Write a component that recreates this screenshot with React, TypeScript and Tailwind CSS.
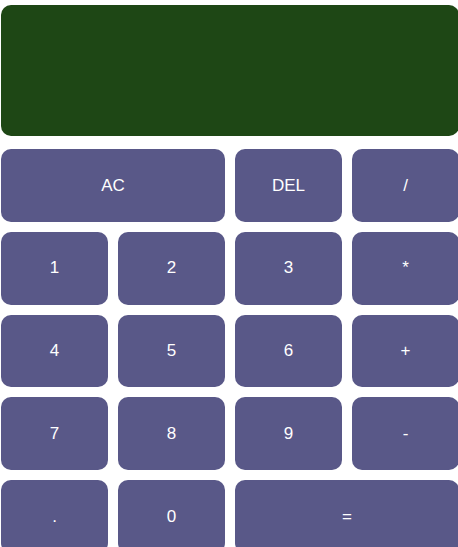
import React from "react";

const keys: { label: string; span?: boolean }[] = [
  { label: "AC", span: true },
  { label: "DEL" },
  { label: "/" },
  { label: "1" },
  { label: "2" },
  { label: "3" },
  { label: "*" },
  { label: "4" },
  { label: "5" },
  { label: "6" },
  { label: "+" },
  { label: "7" },
  { label: "8" },
  { label: "9" },
  { label: "-" },
  { label: "." },
  { label: "0" },
  { label: "=", span: true },
];

export default function App() {
  return (
    <div className="w-[458px] h-[547px] overflow-hidden bg-white pl-[1px] pt-[5px] font-['Liberation_Sans',Arial,sans-serif]">
      <div className="w-[458px]">
        <div className="h-[131px] rounded-[10px] bg-[#1e4715]" />
        <div className="mt-[13px] grid grid-cols-[repeat(4,107px)] auto-rows-[72.75px] gap-x-[10px] gap-y-[10px]">
          {keys.map((k) => (
            <button
              key={k.label}
              className={`${k.span ? "col-span-2" : ""} flex items-center justify-center rounded-[10px] bg-[#595888] text-[17px] text-white`}
            >
              {k.label}
            </button>
          ))}
        </div>
      </div>
    </div>
  );
}
